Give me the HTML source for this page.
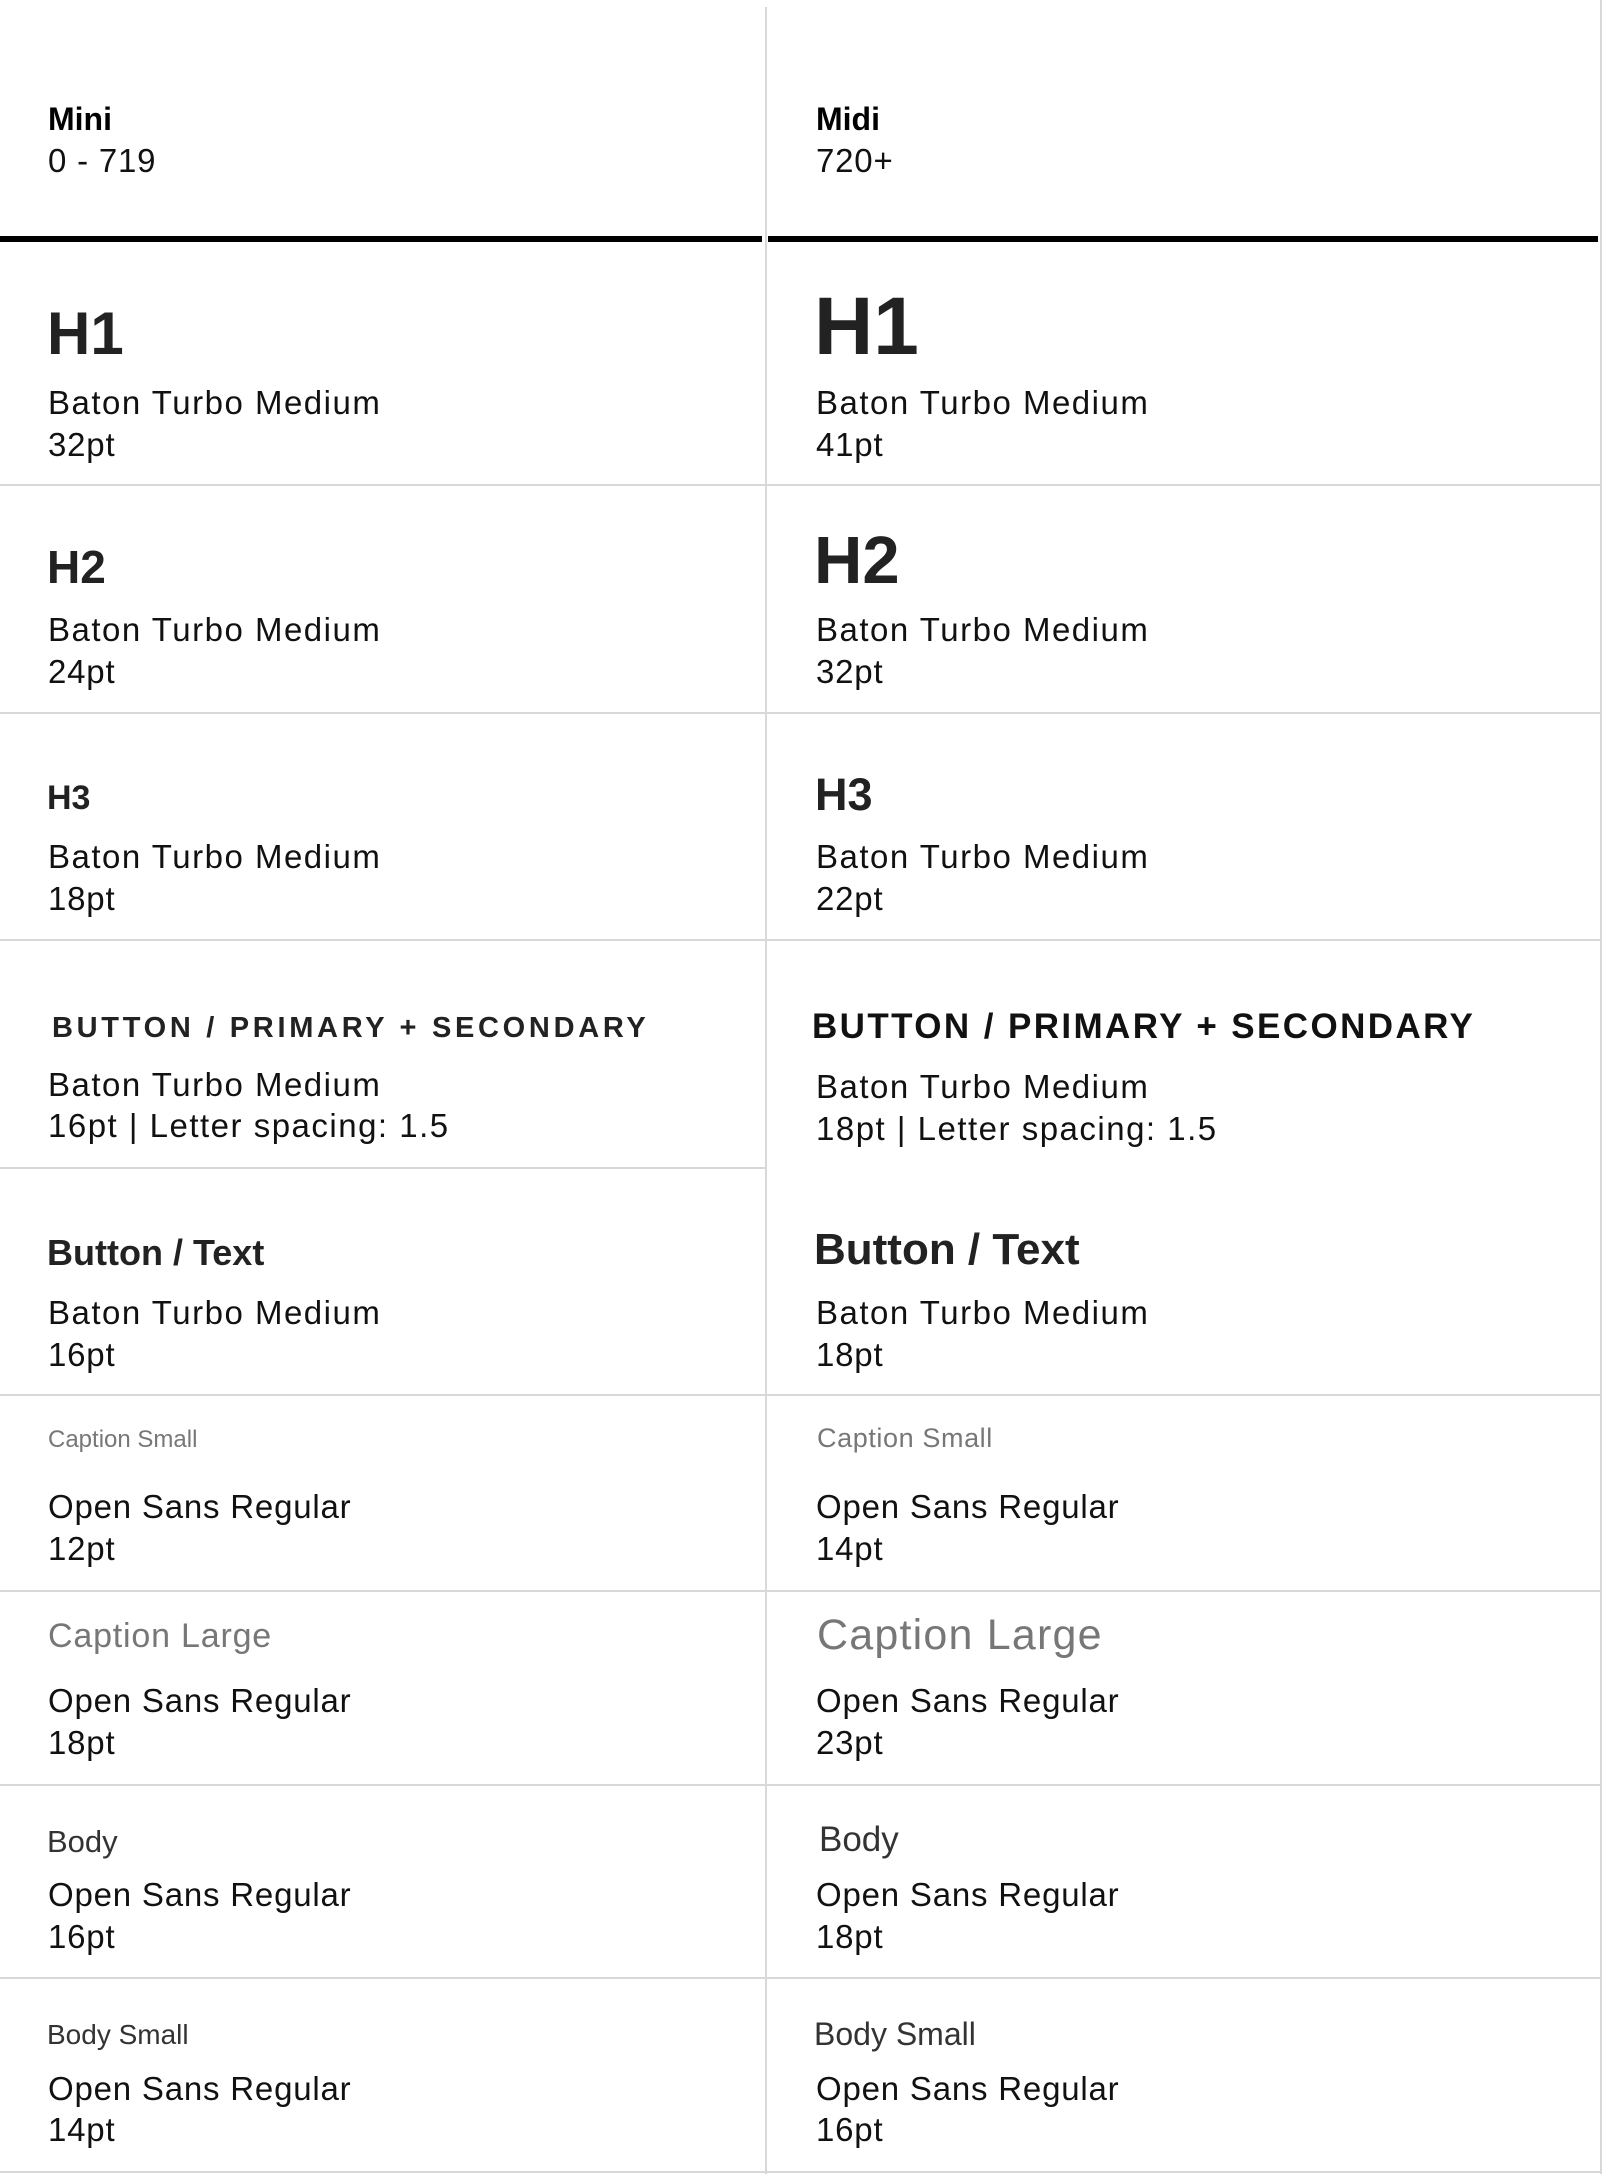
<!DOCTYPE html>
<html><head><meta charset="utf-8"><style>
html,body{margin:0;padding:0;background:#fff;}
body{width:1604px;height:2174px;position:relative;overflow:hidden;font-family:"Liberation Sans",sans-serif;color:#111;}
.t{position:absolute;line-height:1;white-space:nowrap;}
.b{font-size:33px;letter-spacing:0.8px;color:#111;}
.bt{letter-spacing:1.5px;}
.h{font-weight:bold;color:#222;}
.g{color:#777;}
.hl{position:absolute;height:2px;background:#d8d8d8;}
.vl{position:absolute;width:2px;background:#d8d8d8;}
</style></head><body>
<div class="vl" style="left:765px;top:7px;height:2167px"></div>
<div class="vl" style="left:1600px;top:0;height:2174px"></div>
<div style="position:absolute;left:0;top:236px;width:762px;height:6px;background:#000"></div>
<div style="position:absolute;left:768px;top:236px;width:830px;height:6px;background:#000"></div>
<div class="hl" style="left:0;top:484px;width:1601px"></div>
<div class="hl" style="left:0;top:712px;width:1601px"></div>
<div class="hl" style="left:0;top:939px;width:1601px"></div>
<div class="hl" style="left:0;top:1167px;width:766px"></div>
<div class="hl" style="left:0;top:1394px;width:1601px"></div>
<div class="hl" style="left:0;top:1590px;width:1601px"></div>
<div class="hl" style="left:0;top:1784px;width:1601px"></div>
<div class="hl" style="left:0;top:1977px;width:1601px"></div>
<div class="hl" style="left:0;top:2171px;width:1601px"></div>

<div class="t h" style="left:48px;top:103px;font-size:32px;color:#000">Mini</div>
<div class="t b" style="left:48px;top:144px">0 - 719</div>
<div class="t h" style="left:816px;top:103px;font-size:32px;color:#000">Midi</div>
<div class="t b" style="left:816px;top:144px">720+</div>

<div class="t h" style="left:47px;top:304px;font-size:60px">H1</div>
<div class="t b bt" style="left:48px;top:386px">Baton Turbo Medium</div>
<div class="t b" style="left:48px;top:428px">32pt</div>
<div class="t h" style="left:814px;top:286px;font-size:82px">H1</div>
<div class="t b bt" style="left:816px;top:386px">Baton Turbo Medium</div>
<div class="t b" style="left:816px;top:428px">41pt</div>

<div class="t h" style="left:47px;top:544px;font-size:46px">H2</div>
<div class="t b bt" style="left:48px;top:613px">Baton Turbo Medium</div>
<div class="t b" style="left:48px;top:655px">24pt</div>
<div class="t h" style="left:814px;top:527px;font-size:67px">H2</div>
<div class="t b bt" style="left:816px;top:613px">Baton Turbo Medium</div>
<div class="t b" style="left:816px;top:655px">32pt</div>

<div class="t h" style="left:47px;top:781px;font-size:34px">H3</div>
<div class="t b bt" style="left:48px;top:840px">Baton Turbo Medium</div>
<div class="t b" style="left:48px;top:882px">18pt</div>
<div class="t h" style="left:815px;top:772px;font-size:45px">H3</div>
<div class="t b bt" style="left:816px;top:840px">Baton Turbo Medium</div>
<div class="t b" style="left:816px;top:882px">22pt</div>

<div class="t h" style="left:52px;top:1014px;font-size:29px;letter-spacing:3.7px">BUTTON / PRIMARY + SECONDARY</div>
<div class="t b bt" style="left:48px;top:1068px">Baton Turbo Medium</div>
<div class="t b bt" style="left:48px;top:1109px">16pt | Letter spacing: 1.5</div>
<div class="t h" style="left:812px;top:1009px;font-size:35px;letter-spacing:2.4px;color:#111">BUTTON / PRIMARY + SECONDARY</div>
<div class="t b bt" style="left:816px;top:1070px">Baton Turbo Medium</div>
<div class="t b bt" style="left:816px;top:1112px">18pt | Letter spacing: 1.5</div>

<div class="t h" style="left:47px;top:1235px;font-size:36px">Button / Text</div>
<div class="t b bt" style="left:48px;top:1296px">Baton Turbo Medium</div>
<div class="t b" style="left:48px;top:1338px">16pt</div>
<div class="t h" style="left:814px;top:1228px;font-size:44px">Button / Text</div>
<div class="t b bt" style="left:816px;top:1296px">Baton Turbo Medium</div>
<div class="t b" style="left:816px;top:1338px">18pt</div>

<div class="t g" style="left:48px;top:1428px;font-size:24px">Caption Small</div>
<div class="t b" style="left:48px;top:1490px">Open Sans Regular</div>
<div class="t b" style="left:48px;top:1532px">12pt</div>
<div class="t g" style="left:817px;top:1425px;font-size:27px;letter-spacing:0.6px">Caption Small</div>
<div class="t b" style="left:816px;top:1490px">Open Sans Regular</div>
<div class="t b" style="left:816px;top:1532px">14pt</div>

<div class="t g" style="left:48px;top:1619px;font-size:34px;letter-spacing:0.8px">Caption Large</div>
<div class="t b" style="left:48px;top:1684px">Open Sans Regular</div>
<div class="t b" style="left:48px;top:1726px">18pt</div>
<div class="t g" style="left:817px;top:1614px;font-size:43px;letter-spacing:1.2px">Caption Large</div>
<div class="t b" style="left:816px;top:1684px">Open Sans Regular</div>
<div class="t b" style="left:816px;top:1726px">23pt</div>

<div class="t" style="left:47px;top:1826px;font-size:31px;color:#333">Body</div>
<div class="t b" style="left:48px;top:1878px">Open Sans Regular</div>
<div class="t b" style="left:48px;top:1920px">16pt</div>
<div class="t" style="left:819px;top:1822px;font-size:35px;color:#333">Body</div>
<div class="t b" style="left:816px;top:1878px">Open Sans Regular</div>
<div class="t b" style="left:816px;top:1920px">18pt</div>

<div class="t" style="left:47px;top:2021px;font-size:28px;color:#333">Body Small</div>
<div class="t b" style="left:48px;top:2072px">Open Sans Regular</div>
<div class="t b" style="left:48px;top:2113px">14pt</div>
<div class="t" style="left:814px;top:2018px;font-size:32px;color:#333">Body Small</div>
<div class="t b" style="left:816px;top:2072px">Open Sans Regular</div>
<div class="t b" style="left:816px;top:2113px">16pt</div>
</body></html>
